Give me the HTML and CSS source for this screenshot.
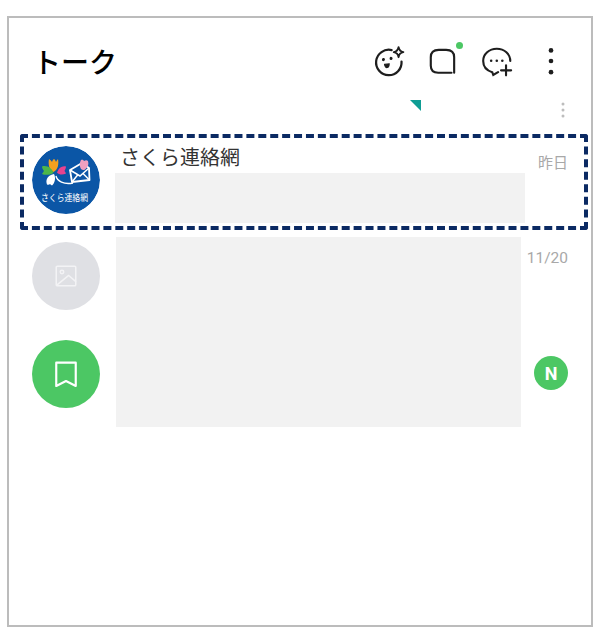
FILE: index.html
```html
<!DOCTYPE html>
<html lang="ja">
<head>
<meta charset="utf-8">
<title>トーク</title>
<link rel="stylesheet" href="styles.css">
</head>
<body>
<main class="frame">
  <header class="header">
    <h1 class="title">トーク</h1>
    <div class="actions">
      <svg class="icon" viewBox="0 0 32 32" fill="none" stroke="#1e1e1e" stroke-width="2.100" stroke-linecap="round">
        <path d="M18.500 5.700A12 12 0 1 0 27.800 16.500"/>
        <path d="M25 3c.5 3 1.600 4.200 4.500 4.700-2.900.5-4 1.700-4.500 4.700-.5-3-1.600-4.200-4.500-4.700 2.900-.5 4-1.700 4.500-4.700z" stroke-width="1.800" stroke-linejoin="round"/>
        <path d="M10.800 14.500c-.1.300-.1.300 0 0M18 13.500c-.1.300-.1.300 0 0" stroke-width="2.800"/>
        <path d="M11.800 19.200l4.400-.6c0 2-.7 3.400-1.900 3.600s-2.200-1-2.500-3z" fill="#1e1e1e" stroke-width="1"/>
      </svg>
      <span class="icon icon-square">
        <svg class="icon" viewBox="0 0 32 32" fill="none" stroke="#1e1e1e" stroke-width="2" stroke-linecap="round">
          <path d="M24 27H11.500C7 27 4.500 24.700 4.500 20.500V12.500C4.500 8 7 5.500 12 5.500h7c5 0 7.500 2.500 7.500 7V27"/>
        </svg>
        <span class="dot"></span>
      </span>
      <svg class="icon" viewBox="0 0 32 32" fill="none" stroke="#1e1e1e" stroke-width="2" stroke-linecap="round">
        <path d="M28.500 16C28.500 9.500 23 4.500 15.800 4.500S3 9.500 3 16c0 5.200 3.500 9 8.500 10.500l1 2.700 4.500-2.700"/>
        <path d="M24.500 20v9.500M19.800 24.800h9.500"/>
        <circle cx="10.500" cy="15.800" r="1.200" fill="#1e1e1e" stroke="none"/>
        <circle cx="15.800" cy="15.800" r="1.200" fill="#1e1e1e" stroke="none"/>
        <circle cx="21" cy="15.800" r="1.200" fill="#1e1e1e" stroke="none"/>
      </svg>
      <svg class="icon" viewBox="0 0 32 32" fill="#1e1e1e">
        <circle cx="16" cy="6" r="2.200"/>
        <circle cx="16" cy="16" r="2.200"/>
        <circle cx="16" cy="26.500" r="2.200"/>
      </svg>
    </div>
  </header>

  <div class="subbar">
    <span class="corner"></span>
    <svg class="more" viewBox="0 0 4 16" fill="#bdbdbd">
      <circle cx="2" cy="2" r="1.500"/>
      <circle cx="2" cy="8" r="1.500"/>
      <circle cx="2" cy="14" r="1.500"/>
    </svg>
  </div>

  <section class="list">
    <article class="row">
      <svg class="avatar" viewBox="0 0 68 68">
        <circle cx="34" cy="34" r="34" fill="#0b56a6"/>
        <path d="M21.500 26C17 24 16 18 17 13C18.500 14 19.500 15 20 16C20.500 14.500 21 13.500 22 13C23 13.500 23.500 14.500 24 16C24.500 15 25 14 26 13C27 18 26 24 21.500 26z" fill="#f3a01f"/>
        <path d="M21.500 27C18 29 13 29.500 10 28C11 26.500 11.500 25.500 12 25C11 24 10 22 10 20.500C15 19 20 22 21.500 27z" fill="#4cb648"/>
        <path d="M25 26.500C27 21.500 30 19.500 34 20.500C34 22 33 24 32.500 25C33 25.500 33.500 26.500 34 27.500C31 29 27 29 25 26.500z" fill="#e8438f"/>
        <path d="M22 28C24 32 23 37 20 39.500C19 39 18.500 38.500 18 38C17.500 38.500 16.500 39 15 38.500C13.500 35 14.500 29.500 22 28z" fill="#fff"/>
        <path d="M24 30C25 35 32 39 41 37" fill="none" stroke="#fff" stroke-width="1.400"/>
        <path d="M38 24L50 17L57 22L57.500 34L40 36z" fill="#0b56a6" stroke="#fff" stroke-width="1.800" stroke-linejoin="round"/>
        <path d="M38 24L48 30L57 22M40 36L46 28.500M57.500 34L51 27.500" fill="none" stroke="#fff" stroke-width="1.500"/>
        <path d="M49 23C47 19 48 16 49 14C50.500 13.500 51.500 14 52 15C53.500 14 55 14 56 15C57 18 56 21 54 22.500C52.500 24.500 50.500 24.500 49 23z" fill="#f0a0c0"/>
        <text class="logo-text" x="9" y="54.500" textLength="47" lengthAdjust="spacingAndGlyphs">さくら連絡網</text>
      </svg>
      <div class="body">
        <h2 class="name">さくら連絡網</h2>
      </div>
      <div class="meta">
        <time class="time time-ja">昨日</time>
      </div>
    </article>

    <article class="row">
      <div class="avatar avatar-gray">
        <svg class="avatar-icon" viewBox="0 0 24 24" fill="none" stroke="#f3f3f5" stroke-width="1.400" stroke-linecap="round" stroke-linejoin="round">
          <rect x="3" y="3" width="18" height="18" rx="1"/>
          <circle cx="8.300" cy="8.300" r="1.600"/>
          <path d="M3.500 20.500L14.500 11.500 20.800 17"/>
        </svg>
      </div>
      <div class="body"></div>
      <div class="meta">
        <time class="time">11/20</time>
      </div>
    </article>

    <article class="row row-last">
      <div class="avatar avatar-green">
        <svg class="avatar-icon" viewBox="0 0 24 24" fill="none" stroke="#fff" stroke-width="2" stroke-linejoin="round">
          <path d="M3 1.500h18V23l-9-4.500L3 23z"/>
        </svg>
      </div>
      <div class="body"></div>
      <div class="meta">
        <span class="badge">N</span>
      </div>
    </article>
  </section>

  <div class="mask mask-one"></div>
  <div class="mask mask-two"></div>
  <div class="highlight"></div>
</main>
</body>
</html>
```

FILE: styles.css
```css
* {
  box-sizing: border-box;
}

html,
body {
  margin: 0;
  padding: 0;
  background: #fff;
}

body {
  padding: 16px 9px 11px 7px;
  font-family: "Noto Sans CJK JP", "Noto Sans", sans-serif;
  color: #1e1e1e;
}

.frame {
  position: relative;
  height: 611px;
  border: 2px solid #bcbcbc;
  background: #fff;
}

.header {
  display: flex;
  align-items: center;
  justify-content: space-between;
  height: 82px;
  padding: 4px 23px 0 24px;
}

.title {
  margin: 0;
  font-size: 28px;
  font-weight: 500;
  line-height: 40px;
  color: #000;
}

.actions {
  display: flex;
  align-items: center;
  gap: 20px;
}

.icon {
  display: block;
  width: 34px;
  height: 34px;
}

.icon-square {
  position: relative;
}

.dot {
  position: absolute;
  top: -2px;
  right: -3px;
  width: 7px;
  height: 7px;
  border-radius: 50%;
  background: #4cc764;
}

.subbar {
  display: flex;
  align-items: flex-start;
  justify-content: flex-end;
  gap: 140px;
  height: 38px;
  padding: 0 26px 0 0;
}

.corner {
  width: 11px;
  height: 11px;
  background: #0f9d94;
  clip-path: polygon(0 0, 100% 0, 100% 100%);
}

.more {
  display: block;
  width: 4px;
  height: 16px;
  margin-top: 2px;
}

.list {
  display: flex;
  flex-direction: column;
  gap: 28px;
  padding-left: 23px;
  padding-top: 8px;
}

.row {
  display: flex;
  align-items: flex-start;
  height: 68px;
}

.row-last {
  margin-top: 2px;
}

.avatar {
  display: flex;
  flex: none;
  align-items: center;
  justify-content: center;
  width: 68px;
  height: 68px;
  border-radius: 50%;
}

.avatar-gray {
  background: #dfe0e4;
}

.avatar-green {
  background: #4cc764;
}

.avatar-icon {
  width: 26px;
  height: 26px;
}

.logo-text {
  font-family: "Noto Sans CJK JP", sans-serif;
  font-size: 9.500px;
  fill: #fff;
}

.body {
  flex: 1;
  min-width: 0;
  padding-left: 20px;
}

.name {
  margin: -3px 0 0;
  font-size: 20px;
  font-weight: 400;
  line-height: 28px;
  color: #333;
}

.meta {
  display: flex;
  flex: none;
  justify-content: flex-end;
  width: 70px;
  padding-right: 23px;
}

.time {
  margin-top: 5px;
  font-family: Roboto, "Noto Sans CJK JP", sans-serif;
  font-size: 15.500px;
  line-height: 22px;
  color: #a8a8a8;
  white-space: nowrap;
}

.time-ja {
  font-family: "Noto Sans CJK JP", sans-serif;
  font-size: 15px;
}

.badge {
  display: flex;
  align-items: center;
  justify-content: center;
  width: 34px;
  height: 34px;
  margin-top: 16px;
  border-radius: 50%;
  background: #4cc764;
  font-family: Roboto, sans-serif;
  font-size: 18px;
  font-weight: 700;
  color: #fff;
}

.mask {
  position: absolute;
  background: #f2f2f2;
}

.mask-one {
  top: 155px;
  left: 106px;
  width: 410px;
  height: 50px;
}

.mask-two {
  top: 219px;
  left: 107px;
  width: 405px;
  height: 190px;
}

.highlight {
  position: absolute;
  top: 116px;
  left: 11px;
  width: 568px;
  height: 96px;
  border: 4px dashed #0b2a63;
  border-radius: 3px;
}
```
